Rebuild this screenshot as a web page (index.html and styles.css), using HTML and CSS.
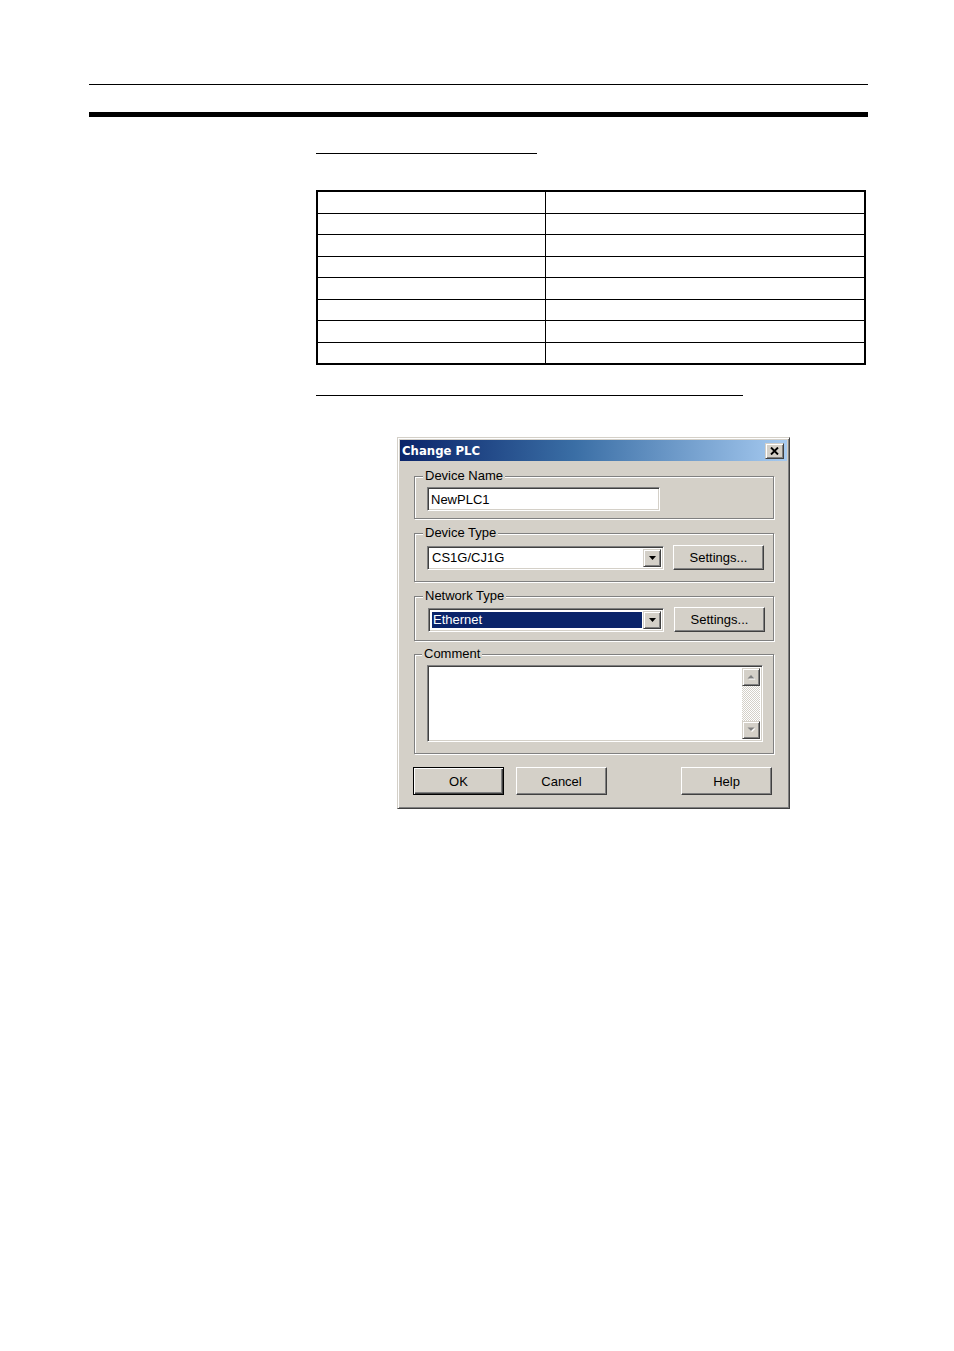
FILE: index.html
```html
<!DOCTYPE html>
<html>
<head>
<meta charset="utf-8">
<title>Change PLC</title>
<link rel="stylesheet" href="styles.css">
</head>
<body>
<div class="page">
  <div class="rule-thin"></div>
  <div class="rule-thick"></div>
  <div class="content">
    <div class="uline u1"></div>
    <div class="grid-table">
      <div class="row"><div class="c1"></div><div class="c2"></div></div>
      <div class="row"><div class="c1"></div><div class="c2"></div></div>
      <div class="row"><div class="c1"></div><div class="c2"></div></div>
      <div class="row"><div class="c1"></div><div class="c2"></div></div>
      <div class="row"><div class="c1"></div><div class="c2"></div></div>
      <div class="row"><div class="c1"></div><div class="c2"></div></div>
      <div class="row"><div class="c1"></div><div class="c2"></div></div>
      <div class="row"><div class="c1"></div><div class="c2"></div></div>
    </div>
    <div class="uline u2"></div>

    <div class="dialog">
      <div class="titlebar">
        <span class="title">Change PLC</span>
        <div class="close raised">
          <svg width="9" height="8" viewBox="0 0 9 8"><path d="M1 0.5 L8 7.5 M8 0.5 L1 7.5" stroke="#000" stroke-width="1.9" fill="none"/></svg>
        </div>
      </div>
      <div class="dbody">
        <div class="group g1">
          <span class="legend">Device Name</span>
          <div class="field textbox"><span class="val">NewPLC1</span></div>
        </div>
        <div class="group g2">
          <span class="legend">Device Type</span>
          <div class="line">
            <div class="field combo c-dev">
              <span class="val">CS1G/CJ1G</span>
              <span class="ddbtn raised"><svg width="7" height="4" viewBox="0 0 7 4"><path d="M0 0H7L3.5 4Z" fill="#000"/></svg></span>
            </div>
            <div class="btn settings">Settings...</div>
          </div>
        </div>
        <div class="group g3">
          <span class="legend">Network Type</span>
          <div class="line">
            <div class="field combo c-net">
              <span class="val selected">Ethernet</span>
              <span class="ddbtn raised"><svg width="7" height="4" viewBox="0 0 7 4"><path d="M0 0H7L3.5 4Z" fill="#000"/></svg></span>
            </div>
            <div class="btn settings s2">Settings...</div>
          </div>
        </div>
        <div class="group g4">
          <span class="legend">Comment</span>
          <div class="field memo">
            <div class="memo-area"></div>
            <div class="scroll">
              <div class="sbtn raised"><svg width="9" height="6" viewBox="0 0 9 6"><path d="M1.5 5.5H8.5L5 2Z" fill="#fff"/><path d="M0.5 4.5H7.5L4 1Z" fill="#808080"/></svg></div>
              <div class="track"></div>
              <div class="sbtn raised"><svg width="9" height="6" viewBox="0 0 9 6"><path d="M1.5 1.5H8.5L5 5Z" fill="#fff"/><path d="M0.5 0.5H7.5L4 4Z" fill="#808080"/></svg></div>
            </div>
          </div>
        </div>
        <div class="buttons">
          <div class="btn ok">OK</div>
          <div class="btn cancel">Cancel</div>
          <div class="btn help">Help</div>
        </div>
      </div>
    </div>
  </div>
</div>
</body>
</html>
```
FILE: styles.css
```css
html, body {
  margin: 0;
  padding: 0;
  background: #fff;
}
body {
  font-family: "Liberation Sans", Arial, sans-serif;
  font-size: 13px;
  color: #000;
}
.page {
  padding-top: 84px;
  padding-left: 89px;
  width: 779px;
}
.rule-thin {
  height: 1px;
  background: #000;
}
.rule-thick {
  margin-top: 27px;
  height: 5px;
  background: #000;
}
.content {
  margin-left: 227px;
}
.uline {
  height: 1px;
  background: #000;
}
.u1 {
  margin-top: 36px;
  width: 221px;
}
.u2 {
  margin-top: 30px;
  width: 427px;
}
.grid-table {
  margin-top: 36px;
  width: 550px;
  height: 175px;
  box-sizing: border-box;
  border: 2px solid #000;
  display: flex;
  flex-direction: column;
}
.row {
  flex: 1;
  display: flex;
}
.row + .row {
  border-top: 1px solid #000;
}
.c1 {
  width: 227px;
  border-right: 1px solid #000;
}
.c2 {
  flex: 1;
}

/* dialog */
.dialog {
  margin-top: 41px;
  margin-left: 81px;
  width: 393px;
  height: 372px;
  box-sizing: border-box;
  background: #d4d0c8;
  border: 1px solid;
  border-color: #d4d0c8 #404040 #404040 #d4d0c8;
  box-shadow: inset 1px 1px 0 #fff, inset -1px -1px 0 #808080;
  padding: 2px;
}
.raised {
  box-sizing: border-box;
  background: #d4d0c8;
  border: 1px solid;
  border-color: #d4d0c8 #404040 #404040 #d4d0c8;
  box-shadow: inset 1px 1px 0 #fff, inset -1px -1px 0 #808080;
}
.titlebar {
  height: 21px;
  display: flex;
  align-items: center;
  background: linear-gradient(to right, #0a246a 0%, #3a6ea5 45%, #a6caf0 100%);
  padding-left: 2px;
}
.title {
  color: #fff;
  font-family: "DejaVu Sans Condensed", "Liberation Sans", Arial, sans-serif;
  font-weight: bold;
  font-size: 13px;
  flex: 1;
}
.close {
  width: 19px;
  height: 16px;
  margin-right: 3px;
  display: flex;
  align-items: center;
  justify-content: center;
}
.close svg {
  display: block;
}
.dbody {
  padding: 15px 13px 0 14px;
  display: flex;
  flex-direction: column;
}
.group {
  position: relative;
  border: 1px solid #808080;
  box-shadow: inset 1px 1px 0 #fff, 1px 1px 0 #fff;
}
.legend {
  position: absolute;
  top: -9px;
  left: 8px;
  padding: 0 2px 0 2px;
  line-height: 15px;
  background: #d4d0c8;
}
.g4 .legend {
  left: 7px;
}
.g1 {
  padding: 10px 0 7px 12px;
}
.g2 {
  margin-top: 14px;
  padding: 11px 0 11px 12px;
}
.g3 {
  margin-top: 14px;
  padding: 10px 0 8px 13px;
}
.g4 {
  margin-top: 13px;
  padding: 10px 0 11px 12px;
}
.line {
  display: flex;
  align-items: center;
  height: 25px;
}
.field {
  box-sizing: border-box;
  background: #fff;
  border: 1px solid;
  border-color: #808080 #fff #fff #808080;
  box-shadow: inset 1px 1px 0 #404040, inset -1px -1px 0 #d4d0c8;
  display: flex;
  align-items: center;
}
.textbox {
  width: 233px;
  height: 24px;
  padding-left: 3px;
}
.combo {
  height: 24px;
  padding: 2px;
}
.c-dev {
  width: 237px;
}
.c-net {
  width: 236px;
}
.combo .val {
  flex: 1;
  align-self: stretch;
  display: flex;
  align-items: center;
  padding-left: 2px;
}
.combo .val.selected {
  margin: 1px;
  padding-left: 1px;
  background: #0a246a;
  color: #fff;
}
.ddbtn {
  width: 18px;
  align-self: stretch;
  display: flex;
  align-items: center;
  justify-content: center;
}
.ddbtn svg {
  display: block;
}
.btn {
  box-sizing: border-box;
  width: 91px;
  height: 25px;
  background: #d4d0c8;
  border: 1px solid;
  border-color: #fff #404040 #404040 #fff;
  box-shadow: inset -1px -1px 0 #808080;
  display: flex;
  align-items: center;
  justify-content: center;
}
.settings {
  margin-left: 9px;
}
.settings.s2 {
  margin-left: 10px;
}
.memo {
  width: 336px;
  height: 77px;
  padding: 2px;
  align-items: stretch;
}
.memo-area {
  flex: 1;
}
.scroll {
  width: 18px;
  display: flex;
  flex-direction: column;
}
.sbtn {
  height: 18px;
  display: flex;
  align-items: center;
  justify-content: center;
}
.sbtn svg {
  display: block;
}
.track {
  flex: 1;
  background: repeating-conic-gradient(#fff 0 25%, #d4d0c8 0 50%) 0 0 / 2px 2px;
}
.buttons {
  margin-top: 13px;
  display: flex;
  height: 28px;
}
.buttons .btn {
  height: 28px;
}
.ok {
  margin-left: -1px;
  border: 1px solid #000;
  box-shadow: inset 1px 1px 0 #fff, inset -1px -1px 0 #404040, inset -2px -2px 0 #808080;
}
.cancel {
  margin-left: 12px;
}
.help {
  margin-left: auto;
  margin-right: 2px;
}
```
